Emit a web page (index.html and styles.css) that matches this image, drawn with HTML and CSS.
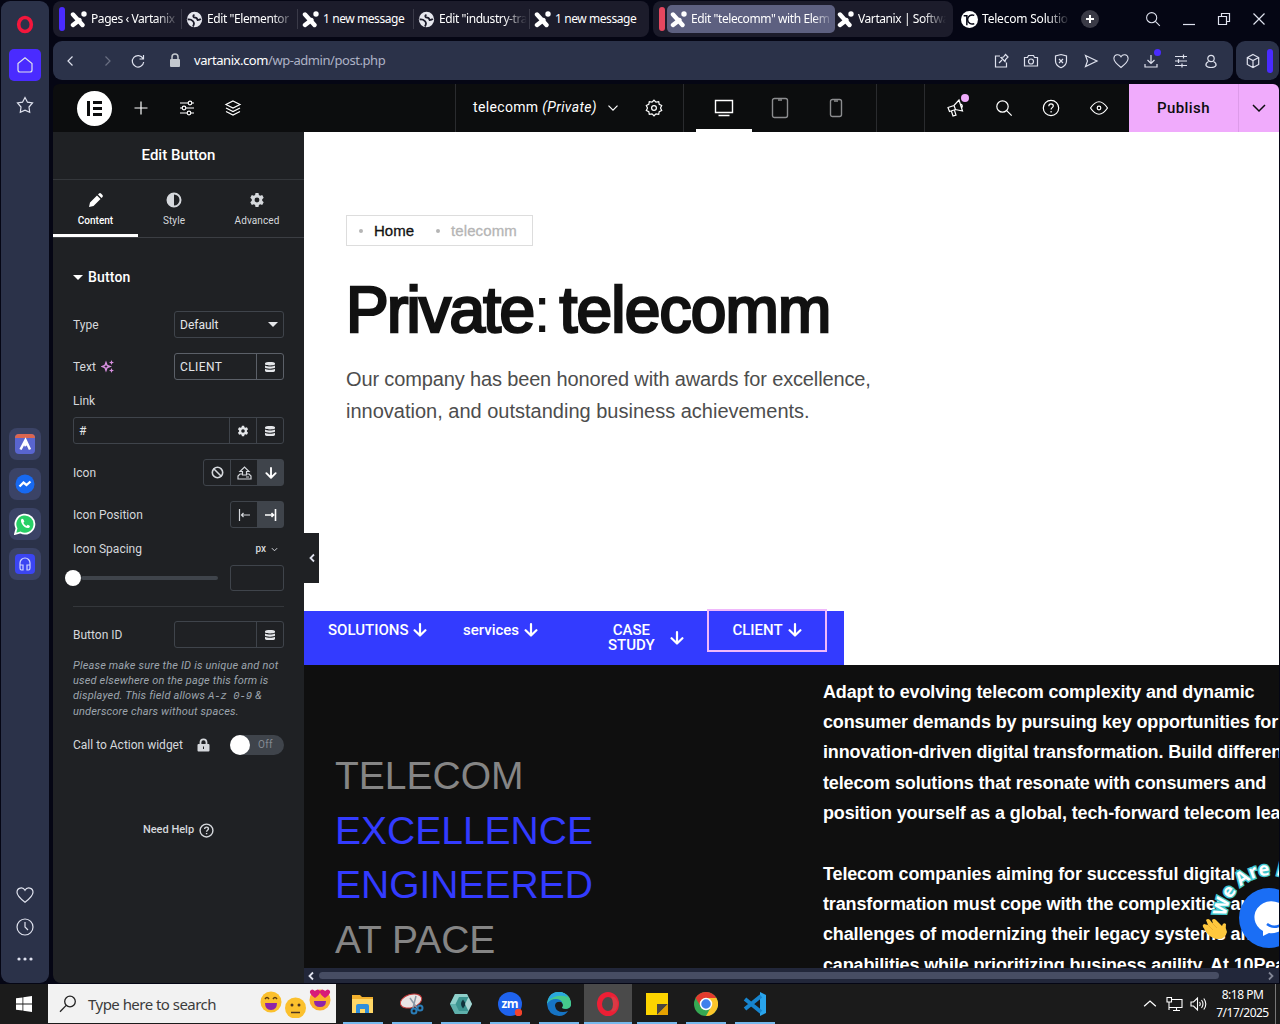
FILE: index.html
```
<!DOCTYPE html>
<html lang="en">
<head>
  <meta charset="UTF-8" />
  <meta name="viewport" content="width=device-width, initial-scale=1" />
  <title>Edit "telecomm" with Elementor</title>
  <link rel="stylesheet" href="styles.css">
</head>
<body>
  <svg width="0" height="0" class="sprite">
    <symbol id="x" viewBox="0 0 17 17"><path d="M3 3.500 12.500 14M9.500 9 3 14" stroke="#fff" stroke-width="4.400" stroke-linecap="round"/><circle cx="14" cy="3" r="2.700" fill="#fff"/></symbol>
    <symbol id="globe" viewBox="0 0 16 16"><circle cx="8" cy="8" r="7.200" fill="#e6e7ee"/><path d="M1.500 8q3-.5 5 1.500t0 5M8 3.500q-2 1-.5 2.500 3 0 3.500 2.500 2 0 3-1" fill="none" stroke="#1c1c2b" stroke-width="1.700"/></symbol>
    <symbol id="search" viewBox="0 0 18 18"><circle cx="7.500" cy="7.500" r="5.700"/><path d="m11.700 11.700 5 5"/></symbol>
    <symbol id="down" viewBox="0 0 12 12"><path d="m1.500 3.700 4.500 4.500 4.500-4.500"/></symbol>
    <symbol id="db" viewBox="0 0 10 12"><path d="M0 2.200C0 .6 10 .6 10 2.200v1C10 4.800 0 4.800 0 3.200zM0 4.600c2 1.300 8 1.300 10 0v1.900C10 8 0 8 0 6.500zM0 7.800c2 1.300 8 1.300 10 0v2.100c0 1.600-10 1.600-10 0z"/></symbol>
    <symbol id="cog" viewBox="0 0 16 16"><path fill-rule="evenodd" d="m6.500 1-.4 2-1.300.8-2-.7L1.300 5.700l1.500 1.500v1.600l-1.500 1.500 1.500 2.600 2-.7 1.300.8.4 2h3l.4-2 1.300-.8 2 .7 1.500-2.600-1.500-1.500V7.200l1.500-1.500-1.500-2.600-2 .7-1.300-.8-.4-2zM8 5.600a2.400 2.400 0 1 0 0 4.800 2.400 2.400 0 0 0 0-4.800z"/></symbol>
    <symbol id="heart" viewBox="0 0 18 18"><path d="M9 16.300C4 12.500 1 9.800 1 6.300 1 1.500 7 .5 9 4.300 11 .5 17 1.500 17 6.300c0 3.500-3 6.200-8 10z"/></symbol>
    <symbol id="arrow" viewBox="0 0 14 14"><path d="M7 1.200v11M1.600 7.200 7 12.500l5.400-5.300" fill="none" stroke="currentColor" stroke-width="2.200" stroke-linecap="round" stroke-linejoin="round"/></symbol>
    <symbol id="help" viewBox="0 0 18 18"><circle cx="9" cy="9" r="7.700"/><path d="M6.800 7.300C6.800 4 11.300 4.300 11.300 7c0 1.700-2.200 1.600-2.200 3.500M9.100 12v1.600"/></symbol>
  </svg>

  <div class="browser">
    <!-- browser rail -->
    <nav class="rail">
      <svg class="opera" width="18" height="19" viewBox="0 0 18 19"><ellipse cx="9" cy="9.500" rx="6.300" ry="7" fill="none" stroke="#f4163c" stroke-width="3.600"/></svg>
      <div class="home"><svg class="ico" width="18" height="18" viewBox="0 0 18 18"><path d="M2 7.500 9 1.800l7 5.700V14q0 2-2 2H4q-2 0-2-2z"/></svg></div>
      <svg class="ico star" width="18" height="18" viewBox="0 0 18 18"><path d="m9 1.500 2.500 4.700 5 .8-3.500 4 .7 5.300L9 14.200l-4.700 2.100L5 11 1.500 7l5-.8z"/></svg>
      <div class="apps">
        <div><svg width="20" height="20" viewBox="0 0 20 20"><rect width="20" height="20" rx="4" fill="#5965cf"/><path d="M0 4q0-4 4-4h12q4 0 4 4z" fill="#dc6650"/><path d="m5.500 15.500 5-9.500 4.500 9.500M9 9l2 3" fill="none" stroke="#fff" stroke-width="2.500"/></svg></div>
        <div><svg width="20" height="20" viewBox="0 0 20 20"><circle cx="10" cy="10" r="9.500" fill="#1769f2"/><path d="m4.500 12.500 4-4 3 2.500 4-3.500" fill="none" stroke="#fff" stroke-width="2.300"/></svg></div>
        <div><svg width="22" height="22" viewBox="0 0 22 22"><path d="m1 21 1.500-5.500a9.500 9.500 0 1 1 4 4z" fill="#28cf66" stroke="#fff" stroke-width="1.800"/><path d="M7.500 6c-2 2 2 9.500 7 9 3-1.500.5-3-.8-3.300l-1.300 1.300c-1.600-.8-2.500-1.700-3-3.200l1-1.200C10 7.500 9 5 7.500 6z" fill="#fff"/></svg></div>
        <div><svg width="20" height="20" viewBox="0 0 20 20"><rect width="20" height="20" rx="4" fill="#3b45f2"/><path d="M5 12V9a5 5 0 0 1 10 0v3M5 11h3v5H6.500Q5 16 5 14zM15 11h-3v5h1.500q1.500 0 1.500-2z" fill="none" stroke="#cfd6ff" stroke-width="1.200"/></svg></div>
      </div>
      <div class="rail-end">
        <svg class="ico" width="18" height="18"><use href="#heart"/></svg>
        <svg class="ico" width="18" height="18" viewBox="0 0 18 18"><circle cx="9" cy="9" r="8"/><path d="M9 4v5l3 3"/></svg>
        <svg width="18" height="18" viewBox="0 0 18 18" fill="#dfe2f0"><circle cx="3" cy="9" r="1.600"/><circle cx="9" cy="9" r="1.600"/><circle cx="15" cy="9" r="1.600"/></svg>
      </div>
    </nav>

    <div class="window">
      <div class="tabstrip">
        <div class="group group-a">
          <i class="island violet"></i>
          <div class="tab"><svg><use href="#x"/></svg><span>Pages ‹ Vartanix</span></div>
          <div class="tab"><svg><use href="#globe"/></svg><span>Edit "Elementor</span></div>
          <div class="tab"><svg><use href="#x"/></svg><span>1 new message</span></div>
          <div class="tab"><svg><use href="#globe"/></svg><span>Edit "industry-tra</span></div>
          <div class="tab"><svg><use href="#x"/></svg><span>1 new message</span></div>
        </div>
        <div class="group group-b">
          <i class="island red"></i>
          <div class="tab active"><svg><use href="#x"/></svg><span>Edit "telecomm" with Elem</span></div>
          <div class="tab"><svg><use href="#x"/></svg><span>Vartanix | Softwa</span></div>
        </div>
        <div class="tab loose"><svg viewBox="0 0 16 16"><circle cx="8" cy="8" r="8" fill="#fff"/><path d="M2.500 4.500h3v9" fill="none" stroke="#050614" stroke-width="1.400"/><path d="M12.500 4.200a4.300 4.300 0 1 0 0 7.600" fill="none" stroke="#050614" stroke-width="1.400"/></svg><span>Telecom Solutio</span></div>
        <div class="newtab"><svg width="18" height="18" viewBox="0 0 18 18"><circle cx="9" cy="9" r="9" fill="#3a3a46"/><path d="M9 5v8M5 9h8" stroke="#fff" stroke-width="2"/></svg></div>
        <div class="winbtns">
          <svg class="ico" width="16" height="16"><use href="#search"/></svg>
          <svg class="ico" width="14" height="14" viewBox="0 0 14 14"><path d="M1 12.500h12"/></svg>
          <svg class="ico" width="14" height="14" viewBox="0 0 14 14"><path d="M1.500 4.500h8v8h-8zM4.500 4.500v-3h8v8h-3"/></svg>
          <svg class="ico" width="14" height="14" viewBox="0 0 14 14"><path d="m1.500 1.500 11 11M12.500 1.500l-11 11"/></svg>
        </div>
      </div>

      <div class="address-row">
        <div class="address">
          <svg class="ico back" width="16" height="16" viewBox="0 0 16 16"><path d="M9.500 3.500 5 8l4.500 4.500"/></svg>
          <svg class="ico fwd" width="16" height="16" viewBox="0 0 16 16"><path d="M6.500 3.500 11 8l-4.500 4.500"/></svg>
          <svg class="ico reload" width="16" height="16" viewBox="0 0 16 16"><path d="M13 5.500A5.700 5.700 0 1 0 13.700 9M13.500 2v4h-4"/></svg>
          <svg class="padlock" width="12" height="15" viewBox="0 0 12 15"><path d="M3 7V4a3 3 0 0 1 6 0v3" fill="none" stroke="#c3c8ce" stroke-width="1.500"/><rect x="1" y="6" width="10" height="8" rx="1" fill="#c3c8ce"/></svg>
          <p class="url"><b>vartanix.com</b>/wp-admin/post.php</p>
          <div class="addr-icons">
            <svg class="ico" viewBox="0 0 16 16"><path d="M7 3H2.500v11h11V9.500M6 10l3-3M8 4.500l4 4 .5-2L15 4l-2.500-2.500-2 2.500z"/></svg>
            <svg class="ico" viewBox="0 0 16 16"><path d="M1.500 4.500h3l1-2h5l1 2h3V13h-13z"/><circle cx="8" cy="8.500" r="2.500"/></svg>
            <svg class="ico" viewBox="0 0 16 16"><path d="M8 1.500 13.500 3v5c0 3.500-2.500 5.500-5.500 6.700C5 13.500 2.500 11.500 2.500 8V3zM6 6l4 4M10 6l-4 4"/></svg>
            <svg class="ico" viewBox="0 0 16 16"><path d="m2.500 2.500 11.500 5.500-11.500 5.500L4.500 8z"/></svg>
            <svg class="ico"><use href="#heart"/></svg>
            <div class="dl"><svg class="ico" viewBox="0 0 16 16"><path d="M8 2v8.500M4.500 7 8 10.500 11.500 7M2 11v3h12v-3"/></svg><i></i></div>
            <svg class="ico" viewBox="0 0 16 16"><path d="M2 3.500h12M2 8h12M2 12.500h12M10.500 1.500v4M5.500 6v4M9 10.500v4"/></svg>
            <svg class="ico" viewBox="0 0 16 16"><circle cx="8" cy="5.500" r="3.200"/><path d="M5.500 8.500Q2.500 10 3 12.500 4 14.500 8 14.500t5-2q.5-2.500-2.500-4"/></svg>
          </div>
        </div>
        <div class="cube">
          <svg class="ico" width="16" height="16" viewBox="0 0 16 16"><path d="m8 1.500 5.700 3v7L8 14.500l-5.700-3v-7zM2.300 4.500 8 7.500l5.700-3M8 7.500v7"/></svg>
          <i></i>
        </div>
      </div>

      <!-- editor top bar -->
      <header class="topbar">
        <div class="tb-left">
          <div class="logo"><i></i><span><b></b><b></b><b></b></span></div>
          <svg class="ico" viewBox="0 0 18 18"><path d="M9 2.500v13M2.500 9h13"/></svg>
          <svg class="ico" viewBox="0 0 18 18"><path d="M2 4h8M14 4h2M2 9h2M8 9h8M2 14h7M13 14h3"/><circle cx="12" cy="4" r="1.800"/><circle cx="6" cy="9" r="1.800"/><circle cx="11" cy="14" r="1.800"/></svg>
          <svg class="ico" viewBox="0 0 18 18"><path d="m9 2 7 3.500L9 9 2 5.500zM2 9l7 3.500L16 9M2 12.500 9 16l7-3.500"/></svg>
        </div>
        <div class="tb-doc">
          <p>telecomm <em>(Private)</em></p>
          <svg class="ico" width="12" height="12"><use href="#down"/></svg>
          <svg class="ico doc-gear" width="18" height="18" viewBox="0 0 18 18"><path d="m9 1.200 2 1.900 2.700-.5.500 2.700 2.500 1.200L15.500 9l1.200 2.500-2.500 1.200-.5 2.700-2.700-.5-2 1.900-2-1.900-2.700.5-.5-2.700-2.500-1.200L2.500 9 1.300 6.500l2.500-1.200.5-2.700 2.700.5z"/><circle cx="9" cy="9" r="2.400"/></svg>
        </div>
        <div class="tb-devices">
          <div class="on"><svg class="ico" width="20" height="20" viewBox="0 0 20 20"><path d="M1.500 2.500h17v12h-17zM4.500 17.500h11"/></svg></div>
          <div><svg class="ico" width="18" height="22" viewBox="0 0 18 22"><rect x="1.500" y="1.500" width="15" height="19" rx="2"/><path d="M7 3h4"/></svg></div>
          <div><svg class="ico" width="14" height="20" viewBox="0 0 14 20"><rect x="1.500" y="1.500" width="11" height="17" rx="2"/><path d="M5 3h4"/></svg></div>
        </div>
        <div class="tb-gap"></div>
        <div class="tb-tools">
          <div class="news"><svg class="ico" width="20" height="20" viewBox="0 0 20 20"><path d="m2 9.500 6-2 5-5.500 3.500 11-7-1.500-6 2zM8 7.500l1.500 4M5.500 13.500l1.500 4.500 3-1-1.500-4.500M14.500 6q2.500.5 1.500 3.500"/></svg><i></i></div>
          <svg class="ico" width="18" height="18"><use href="#search"/></svg>
          <svg class="ico" width="18" height="18"><use href="#help"/></svg>
          <svg class="ico" width="20" height="20" viewBox="0 0 20 20"><path d="M1.500 10Q10-2.500 18.500 10 10 22.500 1.500 10z"/><circle cx="10" cy="10" r="1.800"/></svg>
        </div>
        <div class="publish">Publish</div>
        <div class="publish-more"><svg width="16" height="16"><use href="#down"/></svg></div>
      </header>

      <div class="work">
        <aside class="panel">
          <h1>Edit Button</h1>
          <div class="ptabs">
            <div class="on"><svg width="16" height="16" viewBox="0 0 16 16"><path d="m1 15 1-4.500 7-7L12.500 7l-7 7zM10 2.500l1-1q1-.8 2 0L14.500 3q.8 1 0 2l-1 1z"/></svg>Content</div>
            <div><svg width="16" height="16" viewBox="0 0 16 16"><path fill-rule="evenodd" d="M8 .5a7.500 7.500 0 1 0 0 15 7.500 7.500 0 0 0 0-15zM8 2.500v11A5.500 5.500 0 0 0 8 2.500z"/></svg>Style</div>
            <div><svg width="16" height="16"><use href="#cog"/></svg>Advanced</div>
          </div>
          <div class="controls">
            <h2><i></i>Button</h2>
            <div class="row"><label>Type</label><div class="field select">Default<i></i></div></div>
            <div class="row"><label>Text <svg class="ai" width="13" height="13" viewBox="0 0 13 13"><path d="M5 2.500 6.100 5.400 9 6.500 6.100 7.600 5 10.500 3.900 7.600 1 6.500l2.900-1.100z" fill="none" stroke="#d890e0" stroke-width="1.400"/><path d="m10.500 0 .7 1.800L13 2.500l-1.800.7-.7 1.800-.7-1.800L8 2.500l1.800-.7zM10.500 8l.7 1.800 1.800.7-1.800.7-.7 1.800-.7-1.800-1.800-.7 1.800-.7z" fill="#d890e0"/></svg></label>
              <div class="field lit">CLIENT<span class="btn"><svg width="10" height="12"><use href="#db"/></svg></span></div></div>
            <label class="stack">Link</label>
            <div class="field wide">#<span class="btn"><svg width="12" height="12"><use href="#cog"/></svg></span><span class="btn"><svg width="10" height="12"><use href="#db"/></svg></span></div>
            <div class="row"><label>Icon</label>
              <div class="choices">
                <span><svg width="13" height="13" viewBox="0 0 13 13"><path d="M2.500 2.500l8 8" class="line"/><circle cx="6.500" cy="6.500" r="5.200" class="line"/></svg></span>
                <span><svg width="15" height="14" viewBox="0 0 15 14"><path d="M5.500 9V5.500H3L7.500 1 12 5.500H9.500V9zM5.500 8H3L1 10v3h13v-3l-2-2H9.500M9 11h3" class="line thin"/></svg></span>
                <span class="on"><svg width="12" height="12"><use href="#arrow"/></svg></span>
              </div></div>
            <div class="row"><label>Icon Position</label>
              <div class="choices">
                <span><svg width="13" height="12" viewBox="0 0 13 12"><path d="M1.500 0v12M3 6h9M5.500 4 3.500 6l2 2" class="line thin"/></svg></span>
                <span class="on"><svg width="13" height="12" viewBox="0 0 13 12"><path d="M11.500 0v12M1 6h9M7.500 4l2 2-2 2" class="line"/></svg></span>
              </div></div>
            <div class="stack units"><label>Icon Spacing</label><span>px<svg class="ico" width="7" height="7"><use href="#down"/></svg></span></div>
            <div class="slider"><i></i><div class="track"></div><div class="num"></div></div>
            <hr>
            <div class="row id-row"><label>Button ID</label><div class="field"><span class="btn"><svg width="10" height="12"><use href="#db"/></svg></span></div></div>
            <p class="desc">Please make sure the ID is unique and not<br>used elsewhere on the page this form is<br>displayed. This field allows <code>A-z 0-9</code> &amp;<br>underscore chars without spaces.</p>
            <div class="row cta"><label>Call to Action widget</label>
              <svg class="lock" width="13" height="14" viewBox="0 0 13 14"><path d="M3.500 7V4.300a3 3 0 0 1 6 0V7" fill="none" stroke="#d5d8dc" stroke-width="1.800"/><path fill-rule="evenodd" d="M1.500 6h10q1 0 1 1v5.500q0 1-1 1h-10q-1 0-1-1V7q0-1 1-1zM6 8.500v2.500h1V8.500z" fill="#d5d8dc"/></svg>
              <div class="toggle"><i></i>Off</div></div>
            <p class="need-help">Need Help <svg class="ico" width="15" height="15"><use href="#help"/></svg></p>
          </div>
        </aside>

        <main class="preview">
          <div class="collapse"><svg class="ico" width="8" height="10" viewBox="0 0 8 10"><path d="M6 1.500 2.500 5 6 8.500"/></svg></div>
          <section class="hero">
            <div class="crumbs"><i></i><span>Home</span><i></i><span class="here">telecomm</span></div>
            <h3>Private<span>:</span> <b>telecomm</b></h3>
            <p class="l1">Our company has been honored with awards for excellence,</p>
            <p>innovation, and outstanding business achievements.</p>
          </section>
          <div class="menu">
            <div class="m1">SOLUTIONS <svg><use href="#arrow"/></svg></div>
            <div class="m2">services <svg><use href="#arrow"/></svg></div>
            <div class="m3"><span>CASE<br>STUDY</span> <svg><use href="#arrow"/></svg></div>
            <div class="m4">CLIENT <svg><use href="#arrow"/></svg></div>
          </div>
          <section class="dark">
            <h4>TELECOM<br><b>EXCELLENCE</b><br><b>ENGINEERED</b><br>AT PACE</h4>
            <div class="copy">
              <p>Adapt to evolving telecom complexity and dynamic<br>consumer demands by pursuing key opportunities for<br>innovation-driven digital transformation. Build different<br>telecom solutions that resonate with consumers and<br>position yourself as a global, tech-forward telecom leader.</p>
              <p>Telecom companies aiming for successful digital<br>transformation must cope with the complexities and<br>challenges of modernizing their legacy systems and<br>capabilities while prioritizing business agility. At 10Pearls</p>
            </div>
          </section>
          <svg class="chat" width="80" height="100" viewBox="0 0 80 100">
            <defs><path id="arc" d="M27 68A45 45 0 0 1 117 68"/></defs>
            <text class="halo"><textPath href="#arc" startOffset="3">We Are Here!</textPath></text>
            <circle cx="70" cy="66" r="30" fill="#1a6ef5"/>
            <path d="M61 77a17 16 0 1 1 9 4l-6 3v-5z" fill="#fff"/>
            <path d="M68 72q6 5 14 1" fill="none" stroke="#1a6ef5" stroke-width="2.500"/>
            <path d="m5 72 4 1-2-5q2-2 4 0l3 4-1-4q2-2 4 0l6 6q1-4 4-2-1 4 1 8-2 8-10 7Q10 86 5 77l1 1-2-3q-1-2 1-3z" fill="#ffc83d"/>
            <path d="m9 73 5 5M13 71l5 5" stroke="#f0b030" fill="none"/>
          </svg>
          <div class="hscroll"><svg class="ico" width="8" height="10" viewBox="0 0 8 10"><path d="M6 1.500 2.500 5 6 8.500"/></svg><i></i><svg class="ico dim" width="8" height="10" viewBox="0 0 8 10"><path d="M2 1.500 5.500 5 2 8.500"/></svg></div>
        </main>
      </div>
    </div>
  </div>

  <!-- windows taskbar -->
  <footer class="taskbar">
    <div class="start"><svg width="16" height="16" viewBox="0 0 16 16" fill="#fff"><path d="M0 2.300 6.500 1.400v6.200H0zM7.300 1.300 16 0v7.600H7.300zM0 8.400h6.500v6.200L0 13.700zM7.300 8.400H16V16l-8.700-1.300z"/></svg></div>
    <div class="search">
      <svg width="18" height="18" viewBox="0 0 18 18"><circle cx="11" cy="6.500" r="5.300"/><path d="M7.200 10.400 1 16.700"/></svg>
      <span>Type here to search</span>
      <svg class="faces" width="72" height="30" viewBox="0 0 72 30">
        <circle cx="11" cy="14" r="10.500" fill="#fbc02d"/><path d="M5 15h12q0 7-6 7t-6-7z" fill="#8e24aa"/><path d="M5 11q2-3 4 0M13 11q2-3 4 0" fill="none" stroke="#5d3b12" stroke-width="1.400"/>
        <circle cx="35.500" cy="20" r="10.500" fill="#fbc02d"/><circle cx="32" cy="17" r="1.500" fill="#4e3420"/><circle cx="39" cy="17" r="1.500" fill="#4e3420"/><path d="M31 24.500h9" stroke="#4e3420" stroke-width="1.500"/>
        <circle cx="60" cy="12" r="10.500" fill="#fbb02d"/><path d="M54 13h12q0 6-6 6t-6-6z" fill="#8e24aa"/><path d="M55 10Q49 6 50 3q2-3 5 0 3-3 5 0 1 3-5 7zM65 10q-6-4-5-7 2-3 5 0 3-3 5 0 1 3-5 7z" fill="#d81b78"/>
      </svg>
    </div>
    <div class="tasks">
      <div><svg viewBox="0 0 24 24"><path d="M1 3h8l2 2h11v16H1z" fill="#f2b02d"/><path d="M1 7h21v14H1z" fill="#ffd766"/><path d="M5 21v-7q0-2 2-2h9q2 0 2 2v7h-4v-4h-5v4z" fill="#2f8fdc"/></svg></div>
      <div><svg viewBox="0 0 24 24"><ellipse cx="11" cy="9" rx="11" ry="6.500" fill="#e9e4e4" stroke="#c43b3b" transform="rotate(-18 11 9)"/><path d="m10 6 7 10M16 4l-3 12" stroke="#8a99a6" stroke-width="1.500"/><circle cx="14" cy="19" r="2.500" fill="none" stroke="#2a7db8" stroke-width="2"/><circle cx="20" cy="16" r="2.500" fill="none" stroke="#2a7db8" stroke-width="2"/></svg></div>
      <div><svg viewBox="0 0 24 24"><path d="M6 2h12l5 10-5 10H6L1 12z" fill="#3c9490"/><path d="M6 2h12l1.500 3H10L6.500 12H1z" fill="#8fcfca"/><path d="M6.500 12 10 19h9.500L18 22H6L1 12z" fill="#5fb0ab"/><path d="M14 7.500 17 12l-3 4.500q-4-4.500 0-9z" fill="#10333b"/><path d="m19.500 5 3.500 7-3.500 7L16 12z" fill="#a9d6d3"/></svg></div>
      <div><svg viewBox="0 0 24 24"><circle cx="12" cy="12" r="12" fill="#1f63ee"/><text x="11.800" y="15.500" text-anchor="middle" class="zm">zm</text><circle cx="20.500" cy="20.500" r="3.700" fill="#f4432c"/></svg></div>
      <div><svg viewBox="0 0 24 24"><path d="M0 12a12 12 0 0 1 24 0c0 5-6 5.500-9 4 2-2 1-7-4-7-4 0-8 2-11 3z" fill="#31b8c7"/><path d="M12 0a12 12 0 0 1 12 12c0 5-6 5.500-9 4 3-4 0-9-7-9-3 0-5 1-6.500 2Q4 0 12 0z" fill="#45ca8b"/><path d="M1 9q1-9 11-9 6 0 9 5-11-4-20 4z" fill="#2aa9df"/><path d="M0 12q3-5 9-5 4 0 6 3-7-1-7 4 1 6 8 6 3 0 5-1-3 5-9 5Q1 23 0 12z" fill="#1674c4"/></svg></div>
      <div class="on"><svg viewBox="0 0 24 24"><ellipse cx="12" cy="12" rx="8.500" ry="9.500" fill="none" stroke="#ed1f35" stroke-width="5"/><path d="M15 4.500q4 7.500 0 15 6 1 7-7.500-1-8.500-7-7.500z" fill="#d93a45"/></svg></div>
      <div><svg viewBox="0 0 24 24"><path d="M1 1h22v22H1z" fill="#fdd400"/><path d="M12 12h11L12 23z" fill="#4a4540"/><path d="M23 12v11H12z" fill="#e5a100"/></svg></div>
      <div><svg viewBox="0 0 24 24"><circle cx="12" cy="12" r="12" fill="#35a853"/><path d="M1.600 6A12 12 0 0 1 22.400 6H12a6 6 0 0 0-5 9z" fill="#e33b2e"/><path d="M22.400 6A12 12 0 0 1 12 24l5-9a6 6 0 0 0 0-6l-3-3z" fill="#fcc52b"/><circle cx="12" cy="12" r="5.500" fill="#3f80ec" stroke="#fff" stroke-width="1.500"/></svg></div>
      <div><svg viewBox="0 0 24 24"><path d="m17 0 6 3v18l-6 3z" fill="#29a4ec"/><path d="M18 4 2 17M18 20 2 7" stroke="#1785cf" stroke-width="4"/></svg></div>
    </div>
    <div class="tray">
      <svg class="ico" width="14" height="14" viewBox="0 0 12 12"><path d="m1 8 5-4.500L11 8"/></svg>
      <svg class="ico" width="17" height="16" viewBox="0 0 17 16"><path d="M5.500 3.500h10.500v8H3V8M7 14.500h7M10.500 12v2.500M1 1.500h4.500V6H1zM3 6v8"/></svg>
      <svg class="ico vol" width="17" height="16" viewBox="0 0 17 16"><path d="M1 6h2.500l4-4v12l-4-4H1zM9.500 6q1.500 2 0 4M11.500 4q3 4 0 8M13.800 2.500q4 5.500 0 11"/></svg>
      <div class="clock">8:18 PM<br>7/17/2025</div>
    </div>
  </footer>
</body>
</html>
```
FILE: styles.css
```
/* RESET */
* { margin:0; padding:0; box-sizing:border-box }
body {
  width:1280px; height:1024px; overflow:hidden;
  background:#050614; color:#fff;
  font-family:Roboto,"Liberation Sans",sans-serif;
}
svg { flex:none; display:block }
i { display:block; flex:none }
.sprite { position:absolute }
.ico { fill:none; stroke:#dfe2ee; stroke-width:1.2 }
.browser { display:flex; height:984px; padding-left:1px }

/* RAIL */
.rail {
  width:48px; height:982px; margin-top:1px; margin-right:4px;
  background:#2b3249; border-radius:9px;
  display:flex; flex-direction:column; align-items:center;
}
.opera { margin-top:14px }
.home {
  width:32px; height:32px; margin-top:15px; border-radius:5px; background:#4a2bff;
  display:flex; align-items:center; justify-content:center;
}
.star { margin-top:15px }
.apps { margin-top:314px; display:flex; flex-direction:column; gap:8px }
.apps div {
  width:32px; height:32px; border-radius:8px; background:#3b4366;
  display:flex; align-items:center; justify-content:center;
}
.rail-end { margin-top:306px; display:flex; flex-direction:column; gap:14px }

/* TABS */
.window { width:1226px; flex:none }
.tabstrip { height:41px; display:flex; font:12px/16px "Noto Sans","Open Sans",sans-serif; letter-spacing:-.42px }
.group { height:36px; margin-top:1px; background:#1c1c2b; border-radius:8px; display:flex; align-items:center; padding-left:6px }
.group-a { width:596px; margin-right:4px }
.group-b { width:300px }
.island { width:6px; height:24px; border-radius:3px; margin-right:3px }
.violet { background:#4a2bff }
.red { background:#e5475f }
.tab { display:flex; align-items:center; width:116px; height:28px; padding-left:2px }
.tab svg { width:17px; height:17px; margin-right:4px }
.tab span {
  width:88px; white-space:nowrap;
  -webkit-mask-image:linear-gradient(90deg,#000 74%,transparent);
  mask-image:linear-gradient(90deg,#000 74%,transparent);
}
.group-a .tab { border-left:1px solid #3a3a48; height:20px; padding-left:4px }
.group-a .island + .tab { border-left-color:transparent; padding-left:1px; width:113px }
.group-a .tab:nth-child(4) span, .group-a .tab:last-child span { -webkit-mask-image:none; mask-image:none }
.tab.active { width:168px; margin-left:-1px; padding-left:3px; background:#5d6080; border-radius:5px }
.tab.active span { width:142px; -webkit-mask-image:linear-gradient(90deg,#000 86%,transparent); mask-image:linear-gradient(90deg,#000 86%,transparent) }
.tab.loose { height:36px; margin-top:1px; margin-left:6px; width:113px; letter-spacing:-.2px }
.newtab { margin:10px 0 0 9px; width:18px }
.winbtns { display:flex; align-items:center; height:38px; margin-left:46px; gap:21px }

/* ADDRESS BAR */
.address-row { display:flex; gap:3px; height:43px }
.address { width:1180px; height:39px; border-radius:9px; background:#2b3249; display:flex; align-items:center }
.back { margin-left:10px }
.fwd { margin-left:20px; opacity:.35 }
.reload { margin-left:15px }
.padlock { margin-left:23px }
.url { margin-left:13px; margin-top:-2px; font:13px/18px "Noto Sans",sans-serif; color:#aeb3c6; white-space:nowrap; letter-spacing:-.44px }
.url b { color:#fff; font-weight:400 }
.addr-icons { display:flex; gap:14px; margin-left:auto; margin-right:14px }
.addr-icons svg { width:16px; height:16px }
.dl { position:relative }
.dl i { position:absolute; left:11px; top:-4px; width:7px; height:7px; border-radius:50%; background:#4a2bff }
.cube { width:43px; height:39px; background:#2b3249; border-radius:9px; display:flex; align-items:center; padding-left:9px }
.cube i { width:6px; height:24px; border-radius:3px; background:#4a2bff; margin-left:6px }

/* EDITOR BAR */
.topbar { height:48px; background:#0c0d0e; display:flex; border-radius:6px 6px 0 0; overflow:hidden }
.topbar .ico { stroke:#fff }
.tb-left { width:402px; display:flex; align-items:center; padding-left:24px; gap:28px }
.tb-left .ico { width:18px; height:18px }
.logo { width:35px; height:35px; border-radius:50%; background:#fff; display:flex; align-items:center; justify-content:center; gap:3px; margin-right:-8px }
.logo i { width:3px; height:15px; background:#0c0d0e }
.logo span { display:flex; flex-direction:column; gap:3px }
.logo b { width:9px; height:3px; background:#0c0d0e }
.tb-doc { width:228px; border-left:1px solid #2a2b2e; display:flex; align-items:center; padding-left:17px; font-size:14px; letter-spacing:.35px }
.tb-doc p { width:134px; white-space:nowrap; margin-top:-2px }
.doc-gear { margin-left:26px }
.tb-devices { width:193px; border-left:1px solid #2a2b2e; padding-left:12px; display:flex }
.tb-devices div { width:56px; display:flex; align-items:center; justify-content:center; border-bottom:3px solid transparent; padding-top:3px }
.tb-devices .on { border-color:#fff }
.tb-devices .ico { stroke:#8b8c8e; stroke-width:1.4 }
.tb-devices .on .ico { stroke:#fff }
.tb-gap { width:49px; border:solid #2a2b2e; border-width:0 1px }
.tb-tools { width:204px; display:flex; align-items:center; padding-left:21px; gap:29px }
.news { position:relative }
.news i { position:absolute; left:15px; top:-4px; width:8px; height:8px; border-radius:50%; background:#f0abfc }
.publish { width:109px; background:#f0abfc; color:#0c0d0e; font-size:15px; font-weight:500; line-height:48px; text-align:center; letter-spacing:.4px }
.publish-more { width:41px; background:#f0abfc; border-left:1px solid #dd9be9; display:flex; align-items:center; justify-content:center }
.publish-more svg { fill:none; stroke:#0c0d0e; stroke-width:1.1 }

/* PANEL */
.work { display:flex; height:851px }
.panel { width:251px; background:#1f2124; color:#d5d8dc; font-size:12px; line-height:14px; border-radius:0 0 0 8px }
.panel h1 { height:48px; border-bottom:1px solid #34373b; font-size:15px; line-height:46px; font-weight:500; text-align:center; color:#fff }
.ptabs { display:flex; height:58px; border-bottom:1px solid #3b3e43; font-size:10px; line-height:12px; letter-spacing:.1px }
.ptabs div { flex:1; display:flex; flex-direction:column; align-items:center; padding-top:12px; gap:7px }
.ptabs div:first-child { flex:none; width:85px }
.ptabs div:nth-child(2) { flex:none; width:72px }
.ptabs .on { color:#fff; border-bottom:3px solid #fff; height:57px; font-weight:500; letter-spacing:0 }
.panel svg { fill:currentColor }
.controls { padding:19px 20px 0 }
.controls h2 { height:40px; display:flex; align-items:center; font-size:14px; font-weight:500; color:#fff; gap:5px; margin-bottom:14px; letter-spacing:.15px }
.controls h2 i, .select i { border:5px solid transparent; border-top-color:currentColor; border-bottom:0 }
.row { display:flex; align-items:center; justify-content:space-between; height:27px; margin-bottom:15px; white-space:nowrap }
.row label { display:flex; align-items:center; gap:5px }
.field { width:110px; height:27px; border:1px solid #3f444b; border-radius:3px; display:flex; align-items:center; padding-left:5px; color:#e4e6e9 }
.field.lit { border-color:#5b6068; letter-spacing:.4px }
.select { justify-content:space-between; padding-right:5px }
.btn { width:27px; height:25px; border-left:1px solid #3f444b; display:flex; align-items:center; justify-content:center }
.btn:first-of-type { margin-left:auto }
.lit .btn { border-color:#5b6068 }
.row + .stack { margin-top:-1px }
.stack { display:flex; height:14px; margin-bottom:9px }
.wide { width:211px; margin-bottom:15px }
.choices { display:flex; border:1px solid #3f444b; border-radius:3px }
.choices span { width:27px; height:25px; display:flex; align-items:center; justify-content:center }
.choices span:first-child { width:26px }
.choices span + span { border-left:1px solid #3f444b }
.choices span:last-child { width:26px }
.choices .on { background:#3f444b; color:#fff }
.panel .line { fill:none; stroke:currentColor; stroke-width:1.6 }
.panel .thin { stroke-width:1.2 }
.panel .ico { fill:none; stroke:currentColor; stroke-width:1.7 }
.units { justify-content:space-between; align-items:center }
.units span { font-size:10px; font-weight:500; display:flex; align-items:center; gap:5px; padding-right:6px }
.slider { display:flex; align-items:center; height:26px; margin-bottom:15px }
.slider i { width:16px; height:16px; border-radius:50%; background:#fff; margin-left:-8px }
.track { width:137px; height:4px; background:#3f444b; border-radius:2px }
.num { width:54px; height:26px; border:1px solid #3f444b; border-radius:3px; margin-left:auto }
hr { border:0; height:1px; background:#34373b; margin-bottom:14px }
.id-row { margin-bottom:9.5px }
.desc { font-size:11px; font-style:italic; line-height:15.3px; color:#9da5ae; margin-bottom:15.5px; white-space:nowrap; letter-spacing:.17px }
.desc code { font-family:"Liberation Mono",monospace; font-size:10.5px; letter-spacing:0 }
.cta { height:20px; margin-bottom:66px }
.lock { margin-right:6px }
.toggle { width:54px; height:20px; border-radius:10px; background:#3f444b; display:flex; align-items:center; gap:8px; font-size:10px; color:#858b93; letter-spacing:.3px }
.toggle i { width:20px; height:20px; border-radius:50%; background:#fff }
.need-help { display:flex; align-items:center; justify-content:center; gap:5px; font-size:11px; font-weight:500; height:18px }

/* PREVIEW */
.preview { position:relative; width:975px; height:851px; overflow:hidden; background:#fff; font-family:"Liberation Sans",Arial,sans-serif; display:flex; flex-direction:column; white-space:nowrap }
.collapse { position:absolute; left:0; top:401px; width:15px; height:50px; background:#1f2124; display:flex; align-items:center; justify-content:center }
.collapse .ico, .hscroll .ico { stroke-width:1.8 }
.hero { height:479px; padding:83px 0 0 42px; color:#111 }
.crumbs { width:187px; height:31px; border:1px solid #ddd; display:flex; align-items:center; font-size:15px; padding-left:12px; color:#111 }
.crumbs i { width:4px; height:4px; border-radius:50%; background:#b5b5b5; margin-right:11px }
.crumbs span { width:66px; -webkit-text-stroke:.3px currentColor }
.crumbs span:first-of-type { margin-right:-4px }
.crumbs .here { color:#b5b5b5; letter-spacing:.1px }
.hero h3 { margin-top:28px; font-size:64px; line-height:72px; font-weight:400; letter-spacing:-1.7px; word-spacing:-6px; color:#111; -webkit-text-stroke:2.6px #111 }
.hero h3 span { -webkit-text-stroke:0 }
.hero h3 b { font-weight:400; letter-spacing:-.8px }
.hero p { font-size:20px; line-height:32px; color:#4d4d4d }
.hero .l1 { margin-top:17px; letter-spacing:-.14px }
.menu { width:540px; height:54px; flex:none; background:#333bff; display:flex; font:500 15px/15px Roboto,sans-serif; padding-left:24px }
.menu div { display:flex; align-items:flex-start; gap:5px; padding-top:12px }
.menu svg { width:14px; height:14px }
.m1 { width:135px }
.m2 { width:145px }
.menu .m3 { width:99px; gap:15px; align-items:center; padding:0 0 1px; height:54px; text-align:center }
.menu .m4 { width:120px; height:43px; margin-top:-2px; padding-top:12px; border:2px solid #f0b8fb; justify-content:center }
.dark { height:303px; flex:none; background:#0f0f0f; display:flex; overflow:hidden; padding-left:31px }
.dark h4 { flex:none; width:488px; margin-top:84px; font-size:39px; line-height:54.6px; font-weight:400; color:#858585 }
.dark b { font-weight:400; color:#333bff }
.copy { padding-top:11.6px; font-size:18px; font-weight:700; line-height:30.35px; letter-spacing:-.14px }
.copy p { margin-bottom:30.35px }
.chat { position:absolute; left:895px; top:720px }
.halo { font:bold 18.5px "Open Sans",sans-serif; fill:#fff; stroke:#42c7cf; stroke-width:3px; paint-order:stroke; letter-spacing:.2px }
.hscroll { height:15px; flex:none; background:#22273a; display:flex; align-items:center; padding:0 4px 0 3px }
.hscroll i { width:900px; height:7px; border-radius:4px; background:#474d63; margin-left:4px }
.hscroll .dim { margin-left:auto; opacity:.5 }

/* TASKBAR */
.taskbar { height:40px; background:#1b1b1b; display:flex; font-family:"Noto Sans",sans-serif }
.start { width:48px; display:flex; align-items:center; justify-content:center }
.search { width:288px; height:39px; background:#f2f2f2; display:flex; align-items:center; color:#3c3c3c; font-size:15px; padding-left:11px }
.search > svg:first-child { fill:none; stroke:#222; stroke-width:1.3 }
.search span { margin-left:11px; width:172px; white-space:nowrap; letter-spacing:-.53px }
.faces { margin-top:-2px }
.tasks { display:flex; gap:1px; margin-left:3px }
.tasks div { width:48px; height:40px; display:flex; align-items:center; justify-content:center; position:relative }
.tasks div::after { content:""; position:absolute; left:4px; right:4px; bottom:0; height:2px; background:#76b9ed }
.tasks .on { background:#4a4a4a }
.tasks .on::after { left:0; right:0 }
.tasks svg { width:24px; height:24px }
.zm { font:bold 12px "Open Sans",sans-serif; fill:#fff; letter-spacing:-.5px }
.tray { margin-left:auto; display:flex; align-items:center; gap:7px; padding-right:4px }
.tray .ico { stroke:#fff; stroke-width:1.1 }
.tray .ico:first-child { margin-right:2px }
.tray .vol { margin-right:-4px }
.clock { width:66px; height:40px; padding-top:2px; font-size:12px; line-height:18px; text-align:center; border-right:1px solid #777; letter-spacing:-.5px; white-space:nowrap }
```
